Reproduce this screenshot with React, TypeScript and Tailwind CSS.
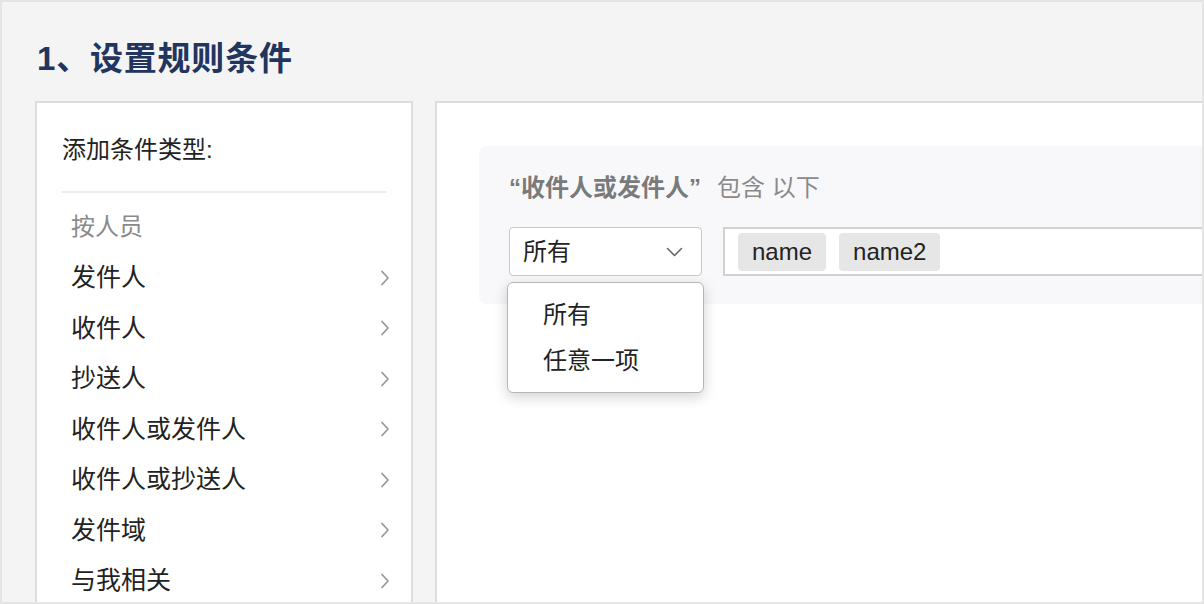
import React from "react";

const Chevron = () => (
  <svg width="10" height="16" viewBox="0 0 10 16" fill="none" className="shrink-0">
    <path d="M2 1.5 L8 8 L2 14.5" stroke="#9a9a9a" strokeWidth="1.8" strokeLinecap="round" strokeLinejoin="round" />
  </svg>
);

const items = ["发件人", "收件人", "抄送人", "收件人或发件人", "收件人或抄送人", "发件域", "与我相关"];

export default function App() {
  return (
    <div className="w-[1204px] h-[604px] overflow-hidden border-2 border-[#e4e4e4] bg-[#f4f4f4] flex flex-col font-['Liberation_Sans','Noto_Sans_CJK_SC',sans-serif]">
      <div className="h-[99px] shrink-0 pl-[35px] pt-[36px]">
        <h1 className="text-[33px] leading-[42px] font-bold text-[#22355f] tracking-[0.8px]">1、设置规则条件</h1>
      </div>
      <div className="flex-1 flex gap-[22px] pl-[33px] min-h-0">
        <div className="w-[378px] shrink-0 bg-white border-2 border-b-0 border-[#dcdcdc] px-[25px] pt-[31px]">
          <div className="text-[24px] leading-[32px] text-[#222] h-[32px]">添加条件类型:</div>
          <div className="h-[2px] bg-[#ececec] mt-[25px]"></div>
          <div className="pl-[9px] pr-0 mt-[9px]">
            <div className="h-[50.5px] flex items-center text-[24px] text-[#8a8a8a]">按人员</div>
            {items.map((t) => (
              <div key={t} className="h-[50.5px] flex items-center justify-between text-[25px] text-[#222] -mr-[4px]">
                <span>{t}</span>
                <Chevron />
              </div>
            ))}
          </div>
        </div>
        <div className="flex-1 bg-white border-2 border-b-0 border-r-0 border-[#dcdcdc] pl-[42px] pt-[43px] min-w-0">
          <div className="bg-[#f8f8fa] rounded-l-[8px] h-[158px] pl-[30px] pt-[27px]">
            <div className="text-[24px] leading-[30px] text-[#8a8a8a] flex">
              <span className="font-bold text-[#7a7a7a]">“收件人或发件人”</span>
              <span className="ml-[16px]">包含 以下</span>
            </div>
            <div className="flex items-center gap-[21px] mt-[24px]">
              <div className="relative shrink-0">
                <div className="w-[193px] h-[49px] bg-white border-[1.5px] border-[#c9c9c9] rounded-[4px] flex items-center justify-between pl-[13px] pr-[18px]">
                  <span className="text-[24px] text-[#222]">所有</span>
                  <svg width="17" height="10" viewBox="0 0 17 10" fill="none">
                    <path d="M1.5 1.5 L8.5 8.5 L15.5 1.5" stroke="#666" strokeWidth="1.6" strokeLinecap="round" strokeLinejoin="round" />
                  </svg>
                </div>
                <div className="absolute left-[-2px] top-[55px] w-[197px] h-[111px] bg-white border border-[#b5b5b5] rounded-[6px] shadow-[0_4px_14px_rgba(0,0,0,0.18)] pl-[35px] pt-[9px] z-10">
                  <div className="h-[46px] flex items-center text-[24px] text-[#222]">所有</div>
                  <div className="h-[46px] flex items-center text-[24px] text-[#222]">任意一项</div>
                </div>
              </div>
              <div className="flex-1 h-[49px] bg-white border-2 border-r-0 border-[#d2d2d2] flex items-center gap-[13px] pl-[13px]">
                <span className="h-[38px] px-[14px] rounded-[4px] bg-[#e6e6e6] flex items-center text-[24px] text-[#222]">name</span>
                <span className="h-[38px] px-[14px] rounded-[4px] bg-[#e6e6e6] flex items-center text-[24px] text-[#222]">name2</span>
              </div>
            </div>
          </div>
        </div>
      </div>
    </div>
  );
}
